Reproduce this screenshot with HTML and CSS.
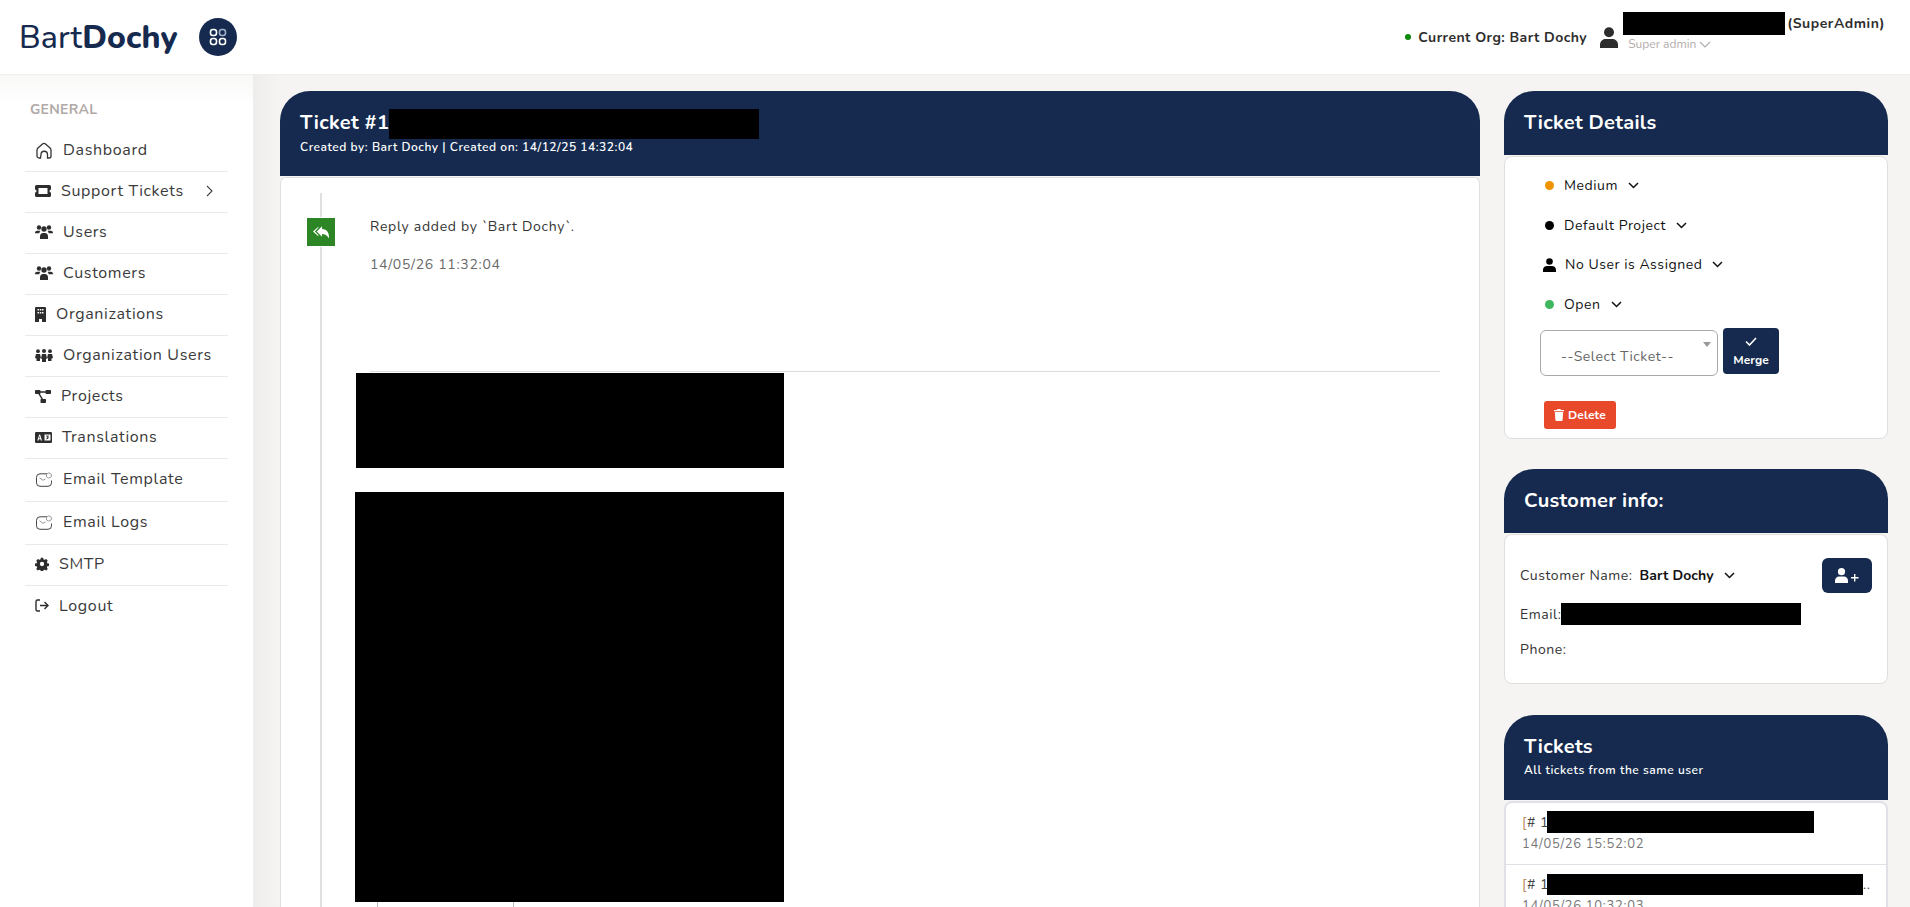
FILE: index.html
```html
<!DOCTYPE html>
<html lang="en">
<head>
    <meta charset="UTF-8">
    <meta name="viewport" content="width=device-width, initial-scale=1.0">
    <title>Ticket - Bart Dochy</title>
    <link rel="stylesheet" href="styles.css">
</head>
<body>
    <header class="topbar">
        <div class="logo">
            <span class="logo-text">Bart<b>Dochy</b></span>
            <span class="logo-btn">
                <svg width="18" height="18" viewBox="0 0 18 18" fill="none" stroke="#fff" stroke-width="1.6">
                    <rect x="1.5" y="1.5" width="6" height="6" rx="2.4"/>
                    <rect x="10.5" y="1.5" width="6" height="6" rx="2.4" stroke="#9fb0c8"/>
                    <rect x="1.5" y="10.5" width="6" height="6" rx="2.4"/>
                    <rect x="10.5" y="10.5" width="6" height="6" rx="2.4"/>
                </svg>
            </span>
        </div>
        <div class="top-right">
            <span class="org-dot"></span>
            <span class="org-name">Current Org: Bart Dochy</span>
            <svg class="top-user" width="18" height="21" viewBox="0 0 18 21" fill="#2d2d2d">
                <circle cx="9" cy="5.2" r="5"/>
                <path d="M0 21v-3.2C0 14 3 12 6 12h6c3 0 6 2 6 5.8V21z"/>
            </svg>
            <div class="user-block">
                <div class="user-line"><span class="redact redact-user"></span><span class="user-role">(SuperAdmin)</span></div>
                <div class="user-sub">Super admin
                    <svg width="12" height="7" viewBox="0 0 12 7" fill="none" stroke="#b3adab" stroke-width="1.2"><path d="M1 1l5 5 5-5"/></svg>
                </div>
            </div>
        </div>
    </header>

    <div class="layout">
        <aside class="sidebar">
            <div class="side-title">GENERAL</div>
            <ul class="side-menu">
                <li>
                    <svg class="ico-wide" width="16" height="17" viewBox="0 0 16 17" fill="none" stroke="#333" stroke-width="1.3"><path d="M4.5 16H3a2 2 0 0 1-2-2V8.2c0-1 .4-1.8 1.2-2.5L6.5 2a2.3 2.3 0 0 1 3 0l4.3 3.7c.8.7 1.2 1.5 1.2 2.5V14a2 2 0 0 1-2 2h-1.500v-3.500a2.500 2.500 0 0 0-6.500 0z"/></svg>
                    Dashboard
                </li>
                <li class="has-arrow">
                    <svg width="16" height="12" viewBox="0 0 16 12"><path fill="#2d2d2d" fill-rule="evenodd" d="M1.5 0h13A1.5 1.5 0 0 1 16 1.5v3a1.500 1.500 0 0 0 0 3v3a1.500 1.500 0 0 1-1.500 1.500h-13A1.500 1.500 0 0 1 0 10.500v-3a1.500 1.500 0 0 0 0-3v-3A1.500 1.500 0 0 1 1.500 0zM3.500 3v6h9V3z"/></svg>
                    Support Tickets
                    <svg class="arrow" width="7" height="12" viewBox="0 0 7 12" fill="none" stroke="#444" stroke-width="1.1"><path d="M1 1l5 5-5 5"/></svg>
                </li>
                <li>
                    <svg width="18" height="14" viewBox="0 0 18 14" fill="#2d2d2d"><circle cx="4" cy="2.5" r="2.2"/><circle cx="14" cy="2.5" r="2.2"/><circle cx="9" cy="4" r="2.7"/><path d="M0 8c0-1.500 1-2.300 2.300-2.300h2c.4 0 .8.1 1.100.3A4 4 0 0 0 4.300 8.300H0zM18 8c0-1.500-1-2.300-2.300-2.300h-2c-.4 0-.8.1-1.100.3a4 4 0 0 1 1.100 2.300H18zM5 14v-2.800C5 9.300 6.200 8 8 8h2c1.800 0 3 1.300 3 3.200V14z"/></svg>
                    Users
                </li>
                <li>
                    <svg width="18" height="14" viewBox="0 0 18 14" fill="#2d2d2d"><circle cx="4" cy="2.5" r="2.2"/><circle cx="14" cy="2.5" r="2.2"/><circle cx="9" cy="4" r="2.7"/><path d="M0 8c0-1.500 1-2.300 2.300-2.300h2c.4 0 .8.1 1.100.3A4 4 0 0 0 4.300 8.300H0zM18 8c0-1.500-1-2.300-2.300-2.300h-2c-.4 0-.8.1-1.100.3a4 4 0 0 1 1.100 2.300H18zM5 14v-2.800C5 9.300 6.200 8 8 8h2c1.800 0 3 1.300 3 3.200V14z"/></svg>
                    Customers
                </li>
                <li>
                    <svg width="11" height="15" viewBox="0 0 11 15"><path fill="#2d2d2d" fill-rule="evenodd" d="M1 0h9a1 1 0 0 1 1 1v14H7v-3H4v3H0V1a1 1 0 0 1 1-1zm1.500 2v1.500H4V2zm2.300 0v1.500h1.500V2zM7 2v1.500h1.500V2zM2.500 5v1.500H4V5zm2.300 0v1.500h1.500V5zM7 5v1.500h1.500V5z"/></svg>
                    Organizations
                </li>
                <li>
                    <svg width="18" height="13" viewBox="0 0 18 13" fill="#2d2d2d"><circle cx="3" cy="2.2" r="1.9"/><circle cx="9" cy="2" r="2"/><circle cx="15" cy="2.2" r="1.9"/><path d="M1 5h4l1 4-1 .5V12H1.500V9.500L0 9zM7 5h4l1 4.500-1 .5v3H7v-3l-1-.5zM13 5h4l1 4-1.500.5V12H13V9.500L12 9z"/></svg>
                    Organization Users
                </li>
                <li>
                    <svg width="16" height="13" viewBox="0 0 16 13" fill="#2d2d2d"><rect width="5.5" height="4" rx=".8"/><rect x="10.5" width="5.5" height="4" rx=".8"/><rect x="5.5" y="9" width="5.5" height="4" rx=".8"/><path d="M5 1.300h6v1.400H5zM3 3.500l1.200-.7 4 6.500-1.200.7z"/></svg>
                    Projects
                </li>
                <li>
                    <svg width="17" height="11" viewBox="0 0 17 11"><rect width="17" height="11" rx="1.2" fill="#2d2d2d"/><path d="M2.300 8.500L4.200 2.500h.9l1.900 6H5.800l-.3-1.200H3.800l-.3 1.200zM4.100 6.200h1.100L4.650 4z" fill="#fff"/><path d="M9.500 2.500h6v6h-6z" fill="#fff"/><path d="M11 4h3M12.500 4v3M11 7l3-1.500" stroke="#2d2d2d" stroke-width=".8" fill="none"/></svg>
                    Translations
                </li>
                <li class="tall">
                    <svg class="ico-wide" width="16" height="15" viewBox="0 0 16 15" fill="none" stroke="#444" stroke-width="1"><path d="M11 1.800H4a3.500 3.500 0 0 0-3.500 3.500v5.500A3.500 3.500 0 0 0 4 14.300h8a3.500 3.500 0 0 0 3.500-3.500V8.500"/><path d="M3.500 5.800l3.500 2.500 2.500-1.400" stroke="#999"/><path d="M12.800 .8l2.500 1.400v2.600l-2.500 1.400-2.300-1.400V2.200z" stroke="#999"/></svg>
                    Email Template
                </li>
                <li class="tall">
                    <svg class="ico-wide" width="16" height="15" viewBox="0 0 16 15" fill="none" stroke="#444" stroke-width="1"><path d="M11 1.800H4a3.500 3.500 0 0 0-3.500 3.500v5.500A3.500 3.500 0 0 0 4 14.300h8a3.500 3.500 0 0 0 3.500-3.500V8.500"/><path d="M3.500 5.800l3.500 2.500 2.500-1.400" stroke="#999"/><path d="M12.800 .8l2.500 1.400v2.600l-2.500 1.400-2.300-1.400V2.200z" stroke="#999"/></svg>
                    Email Logs
                </li>
                <li>
                    <svg width="14" height="14" viewBox="0 0 14 14"><path fill="#2d2d2d" fill-rule="evenodd" d="M5.700 0h2.600l.4 1.900 1.200.5 1.700-1 1.800 1.900-1 1.600.5 1.300 2 .4v2.600l-2 .4-.5 1.200 1 1.700-1.800 1.800-1.700-1-1.200.5-.4 1.900H5.700l-.4-1.900-1.200-.5-1.700 1L.6 12.500l1-1.700-.5-1.200-2-.4V6.600l2-.4.5-1.300-1-1.600L2.400 1.400l1.700 1 1.200-.5zM7 4.600a2.400 2.400 0 1 0 0 4.800 2.400 2.400 0 0 0 0-4.800z" transform="translate(.7 .7) scale(.9)"/></svg>
                    SMTP
                </li>
                <li>
                    <svg width="14" height="13" viewBox="0 0 14 13" fill="none" stroke="#2d2d2d" stroke-width="1.4"><path d="M5 1H2.500A1.500 1.500 0 0 0 1 2.500v8A1.500 1.500 0 0 0 2.500 12H5"/><path d="M5 6.500h8M9.500 3l3.500 3.500L9.500 10"/></svg>
                    Logout
                </li>
            </ul>
        </aside>

        <main class="content">
            <section class="ticket-col">
                <div class="ticket-head">
                    <h1 class="head-title">Ticket #1<span class="redact redact-title"></span></h1>
                    <p class="head-sub">Created by: Bart Dochy | Created on: 14/12/25 14:32:04</p>
                </div>
                <div class="ticket-body">
                    <div class="timeline">
                        <div class="tl-icon">
                            <svg width="16" height="14" viewBox="0 0 15 13" fill="#fff"><path d="M8.500 1v2.800C12 4 15 5.800 15 11.500c0 .5-.3.8-.6.3C13.200 9.500 11 8.300 8.500 8.300V11L3.500 6z"/><path d="M5 1.600v1L1.800 6 5 9.400v1L0 6z"/></svg>
                        </div>
                        <div class="tl-entry">
                            <p class="tl-text">Reply added by `Bart Dochy`.</p>
                            <p class="tl-date">14/05/26 11:32:04</p>
                            <div class="tl-mail">
                                <span class="redact redact-top"></span>
                                <span class="redact redact-big"></span>
                                <div class="tl-cells"></div>
                            </div>
                        </div>
                    </div>
                </div>
            </section>

            <section class="info-col">
                <div class="panel">
                    <div class="panel-head"><h2 class="head-title">Ticket Details</h2></div>
                    <div class="panel-body details">
                        <div class="detail-row"><span class="dot dot-orange"></span>Medium<svg class="chev" width="11" height="7" viewBox="0 0 11 7" fill="none" stroke="#111" stroke-width="1.5"><path d="M1 1l4.500 4.500L10 1"/></svg></div>
                        <div class="detail-row"><span class="dot dot-black"></span>Default Project<svg class="chev" width="11" height="7" viewBox="0 0 11 7" fill="none" stroke="#111" stroke-width="1.5"><path d="M1 1l4.500 4.500L10 1"/></svg></div>
                        <div class="detail-row"><svg class="row-user" width="13" height="14" viewBox="0 0 13 14" fill="#000"><circle cx="6.5" cy="3.5" r="3.3"/><path d="M0 14v-2.200C0 9.500 1.800 8 4 8h5c2.200 0 4 1.500 4 3.800V14z"/></svg>No User is Assigned<svg class="chev" width="11" height="7" viewBox="0 0 11 7" fill="none" stroke="#111" stroke-width="1.5"><path d="M1 1l4.500 4.500L10 1"/></svg></div>
                        <div class="detail-row"><span class="dot dot-green"></span>Open<svg class="chev" width="11" height="7" viewBox="0 0 11 7" fill="none" stroke="#111" stroke-width="1.5"><path d="M1 1l4.500 4.500L10 1"/></svg></div>
                        <div class="merge-row">
                            <div class="select-box">--Select Ticket--<span class="select-arrow"></span></div>
                            <button class="merge-btn">
                                <svg width="12" height="9" viewBox="0 0 12 9" fill="none" stroke="#fff" stroke-width="1.6"><path d="M1 4.500L4.500 8 11 1"/></svg>
                                Merge
                            </button>
                        </div>
                        <button class="delete-btn">
                            <svg width="10" height="12" viewBox="0 0 10 12" fill="#fff"><path d="M3.500 0h3l.5 1h3v1.300H0V1h3zM.8 3h8.400l-.6 8a1 1 0 0 1-1 1H2.400a1 1 0 0 1-1-1z"/></svg>
                            Delete
                        </button>
                    </div>
                </div>

                <div class="panel">
                    <div class="panel-head"><h2 class="head-title">Customer info:</h2></div>
                    <div class="panel-body customer">
                        <div class="cust-top">
                            <span class="cust-label">Customer Name:</span>
                            <b class="cust-name">Bart Dochy</b>
                            <svg class="chev" width="11" height="7" viewBox="0 0 11 7" fill="none" stroke="#111" stroke-width="1.5"><path d="M1 1l4.500 4.500L10 1"/></svg>
                            <button class="add-btn">
                                <svg width="24" height="15" viewBox="0 0 24 15" fill="#fff"><circle cx="6.5" cy="3.7" r="3.6"/><path d="M0 15v-2.200C0 10.300 1.800 8.500 4 8.500h5c2.200 0 4 1.800 4 4.300V15z"/><path d="M19 6h1.400v3h3.100v1.400h-3.100v3H19v-3h-3V9h3z"/></svg>
                            </button>
                        </div>
                        <div class="cust-line">Email:<span class="redact redact-mail"></span></div>
                        <div class="cust-line cust-phone">Phone:</div>
                    </div>
                </div>

                <div class="panel panel-tickets">
                    <div class="panel-head tickets-head">
                        <h2 class="head-title">Tickets</h2>
                        <p class="head-sub">All tickets from the same user</p>
                    </div>
                    <div class="panel-body ticket-list">
                        <div class="list-item">
                            <div class="list-name"><span class="list-num"><span class="bracket">[</span># 1</span><span class="redact redact-t1"></span></div>
                            <div class="list-date">14/05/26 15:52:02</div>
                        </div>
                        <div class="list-item">
                            <div class="list-name"><span class="list-num"><span class="bracket">[</span># 1</span><span class="redact redact-t2"></span>..</div>
                            <div class="list-date">14/05/26 10:32:03</div>
                        </div>
                    </div>
                </div>
            </section>
        </main>
    </div>
</body>
</html>
```

FILE: styles.css
```css
* {
    box-sizing: border-box;
}

html, body {
    height: 100%;
}

body {
    margin: 0;
    height: 907px;
    overflow: hidden;
    font-family: "Nunito", Lato, "Open Sans", sans-serif;
    font-size: 14px;
    letter-spacing: 0.55px;
    color: #2d2d2d;
    background: #f5f4f2;
}

p, h1, h2, ul {
    margin: 0;
    padding: 0;
}

.redact {
    display: inline-block;
    background: #000;
}

/* header */
.topbar {
    height: 75px;
    background: #fff;
    display: flex;
    justify-content: space-between;
    align-items: center;
    padding: 0 25px 0 19px;
    border-bottom: 1px solid #f0efed;
}

.logo {
    display: flex;
    align-items: center;
    gap: 21px;
}

.logo-text {
    font-size: 32px;
    letter-spacing: 0.1px;
    color: #152a4e;
    font-weight: 500;
}

.logo-text b {
    font-weight: 800;
}

.logo-btn {
    width: 38px;
    height: 38px;
    border-radius: 50%;
    background: #152a4e;
    display: flex;
    align-items: center;
    justify-content: center;
}

.top-right {
    display: flex;
    align-items: center;
    height: 75px;
}

.org-dot {
    width: 6px;
    height: 6px;
    border-radius: 50%;
    background: #0a8a0a;
    margin-right: 7px;
}

.org-name {
    font-weight: 700;
    letter-spacing: 0.45px;
    margin-right: 13px;
}

.top-user {
    margin-right: 5px;
}

.user-block {
    margin-bottom: 10px;
}

.user-line {
    display: flex;
    align-items: center;
    font-weight: 700;
    height: 23px;
}

.redact-user {
    width: 162px;
    height: 23px;
    margin-right: 2px;
}

.user-sub {
    font-size: 12px;
    letter-spacing: 0;
    color: #b3adab;
    padding-left: 5px;
    margin-top: 1px;
}

/* sidebar */
.layout {
    display: flex;
    height: 832px;
}

.sidebar {
    width: 253px;
    flex-shrink: 0;
    background: linear-gradient(#f8f8f7, #fff 30px);
    padding: 25px 25px 0;
}

.side-title {
    font-size: 14px;
    font-weight: 700;
    letter-spacing: 0.3px;
    color: #b0a9a6;
    padding-left: 5px;
    height: 20px;
}

.side-menu {
    list-style: none;
    margin-top: 11px;
}

.side-menu li {
    display: flex;
    align-items: center;
    gap: 10px;
    height: 41px;
    padding: 0 0 2px 10px;
    font-size: 16px;
    letter-spacing: 0.65px;
    color: #3a3a3a;
    border-bottom: 1px solid #e9e9e9;
}

.side-menu li:last-child {
    border-bottom: 0;
}

.side-menu li.tall {
    height: 43px;
}

.ico-wide {
    margin: 0 1px;
}

.arrow {
    margin-left: auto;
    margin-right: 15px;
}

/* main */
.content {
    flex: 1;
    display: flex;
    gap: 24px;
    padding: 16px 22px 0 27px;
    background: linear-gradient(90deg, #eeedeb, #f5f4f2 26px);
    min-width: 0;
}

.ticket-col {
    width: 1200px;
    flex-shrink: 0;
}

.info-col {
    width: 384px;
    flex-shrink: 0;
    display: flex;
    flex-direction: column;
    gap: 30px;
}

.ticket-head {
    height: 85px;
    background: #152a4e;
    border-radius: 30px 30px 0 0;
    padding: 18px 20px 0;
    color: #fff;
}

.head-title {
    font-size: 20px;
    line-height: 27px;
    font-weight: 700;
    color: #fff;
    letter-spacing: 0.3px;
    display: flex;
}

.head-sub {
    font-size: 12px;
    font-weight: 600;
    color: #fff;
    letter-spacing: 0.52px;
    line-height: 16px;
}

.redact-title {
    width: 370px;
    height: 30px;
}

.ticket-body {
    margin-top: 1px;
    height: 760px;
    background: #fff;
    border: 1px solid #dfdfdf;
    border-bottom: 0;
    border-radius: 6px 6px 0 0;
    padding: 15px 0 0 23px;
}

.timeline {
    display: flex;
    border-left: 2px solid #e0e0e0;
    margin-left: 16px;
    padding-top: 25px;
    height: 100%;
}

.tl-icon {
    width: 28px;
    height: 28px;
    background: #2d8626;
    display: flex;
    align-items: center;
    justify-content: center;
    margin-left: -15px;
    flex-shrink: 0;
    outline: 1px solid #fff;
}

.tl-entry {
    margin-left: 35px;
    flex: 1;
    padding-right: 39px;
}

.tl-text {
    font-size: 14px;
    letter-spacing: 0.7px;
    line-height: 18px;
    color: #333;
}

.tl-date {
    margin-top: 20px;
    font-size: 14px;
    letter-spacing: 0.7px;
    line-height: 18px;
    color: #6a6a6a;
}

.tl-mail {
    margin-top: 97px;
    border-top: 1px solid #dcdcdc;
    padding-top: 1px;
}

.redact-top {
    display: block;
    width: 428px;
    height: 95px;
    margin-left: -14px;
}

.redact-big {
    display: block;
    width: 429px;
    height: 410px;
    margin: 24px 0 0 -15px;
}

.tl-cells {
    height: 6px;
    width: 137px;
    margin-left: 7px;
    border-left: 1px solid #bbb;
    border-right: 1px solid #bbb;
}

/* right panels */
.panel-tickets {
    margin-top: 1px;
}

.panel-head {
    height: 64px;
    background: #152a4e;
    border-radius: 30px 30px 0 0;
    padding: 18px 20px 0;
}

.panel-body {
    margin-top: 1px;
    background: #fff;
    border: 1px solid #dfdfdf;
    border-radius: 8px;
}

.details {
    height: 283px;
    padding: 9px 35px 0;
}

.detail-row {
    display: flex;
    align-items: center;
    height: 39.5px;
    padding-left: 5px;
    font-size: 14px;
    color: #111;
}

.dot {
    width: 9px;
    height: 9px;
    border-radius: 50%;
    margin-right: 10px;
}

.dot-orange { background: #ef9400; }
.dot-black { background: #000; }
.dot-green { background: #3fb75f; }

.row-user {
    margin: 0 9px 0 -2px;
}

.chev {
    margin-left: 10px;
}

.merge-row {
    display: flex;
    align-items: flex-start;
    gap: 5px;
    margin-top: 4px;
}

.select-box {
    position: relative;
    width: 178px;
    height: 46px;
    margin: 2px 0 0 0;
    padding: 17px 0 0 20px;
    border: 1px solid #aaa;
    border-radius: 6px;
    font-size: 14px;
    line-height: 18px;
    color: #666;
}

.select-arrow {
    position: absolute;
    right: 6px;
    top: 11px;
    border: 4px solid transparent;
    border-top: 5px solid #999;
}

.merge-btn {
    width: 56px;
    height: 46px;
    background: #152a4e;
    border: 0;
    border-radius: 4px;
    color: #fff;
    font: inherit;
    font-size: 12px;
    font-weight: 700;
    letter-spacing: 0;
    padding: 9px 0 0;
    display: flex;
    flex-direction: column;
    align-items: center;
    gap: 6px;
}

.delete-btn {
    margin: 25px 0 0 4px;
    width: 72px;
    height: 28px;
    background: #e8492b;
    border: 0;
    border-radius: 3px;
    color: #fff;
    font: inherit;
    font-size: 12px;
    font-weight: 700;
    letter-spacing: 0.2px;
    display: flex;
    align-items: center;
    justify-content: center;
    gap: 4px;
}

.customer {
    height: 150px;
    padding: 23px 15px 0;
}

.cust-top {
    display: flex;
    align-items: center;
    height: 35px;
}

.cust-label {
    margin-right: 7px;
    color: #333;
}

.cust-name {
    color: #111;
    letter-spacing: 0.1px;
}

.add-btn {
    margin-left: auto;
    width: 50px;
    height: 35px;
    background: #152a4e;
    border: 0;
    border-radius: 6px;
    display: flex;
    align-items: center;
    justify-content: center;
    padding: 0;
}

.cust-line {
    display: flex;
    align-items: center;
    height: 22px;
    margin-top: 10px;
    color: #333;
}

.cust-phone {
    margin-top: 13px;
}

.redact-mail {
    width: 240px;
    height: 22px;
}

.tickets-head {
    height: 85px;
}

.tickets-head .head-sub {
    margin-top: 2px;
}

.ticket-list {
    height: 140px;
    border: 2px solid #e0e0e6;
    border-bottom: 0;
    border-radius: 8px 8px 0 0;
}

.list-item {
    height: 62px;
    padding: 8px 0 0 16px;
    border-bottom: 1px solid #e0e0e6;
}

.list-name {
    display: flex;
    align-items: center;
    height: 22px;
    color: #444;
}

.list-num {
    width: 25px;
    flex-shrink: 0;
    white-space: nowrap;
}

.bracket {
    color: #b98a5e;
}

.redact-t1 {
    width: 267px;
    height: 22px;
}

.redact-t2 {
    width: 316px;
    height: 21px;
}

.list-date {
    margin-top: 1px;
    font-size: 13px;
    letter-spacing: 0.7px;
    color: #777;
    line-height: 20px;
}
```
